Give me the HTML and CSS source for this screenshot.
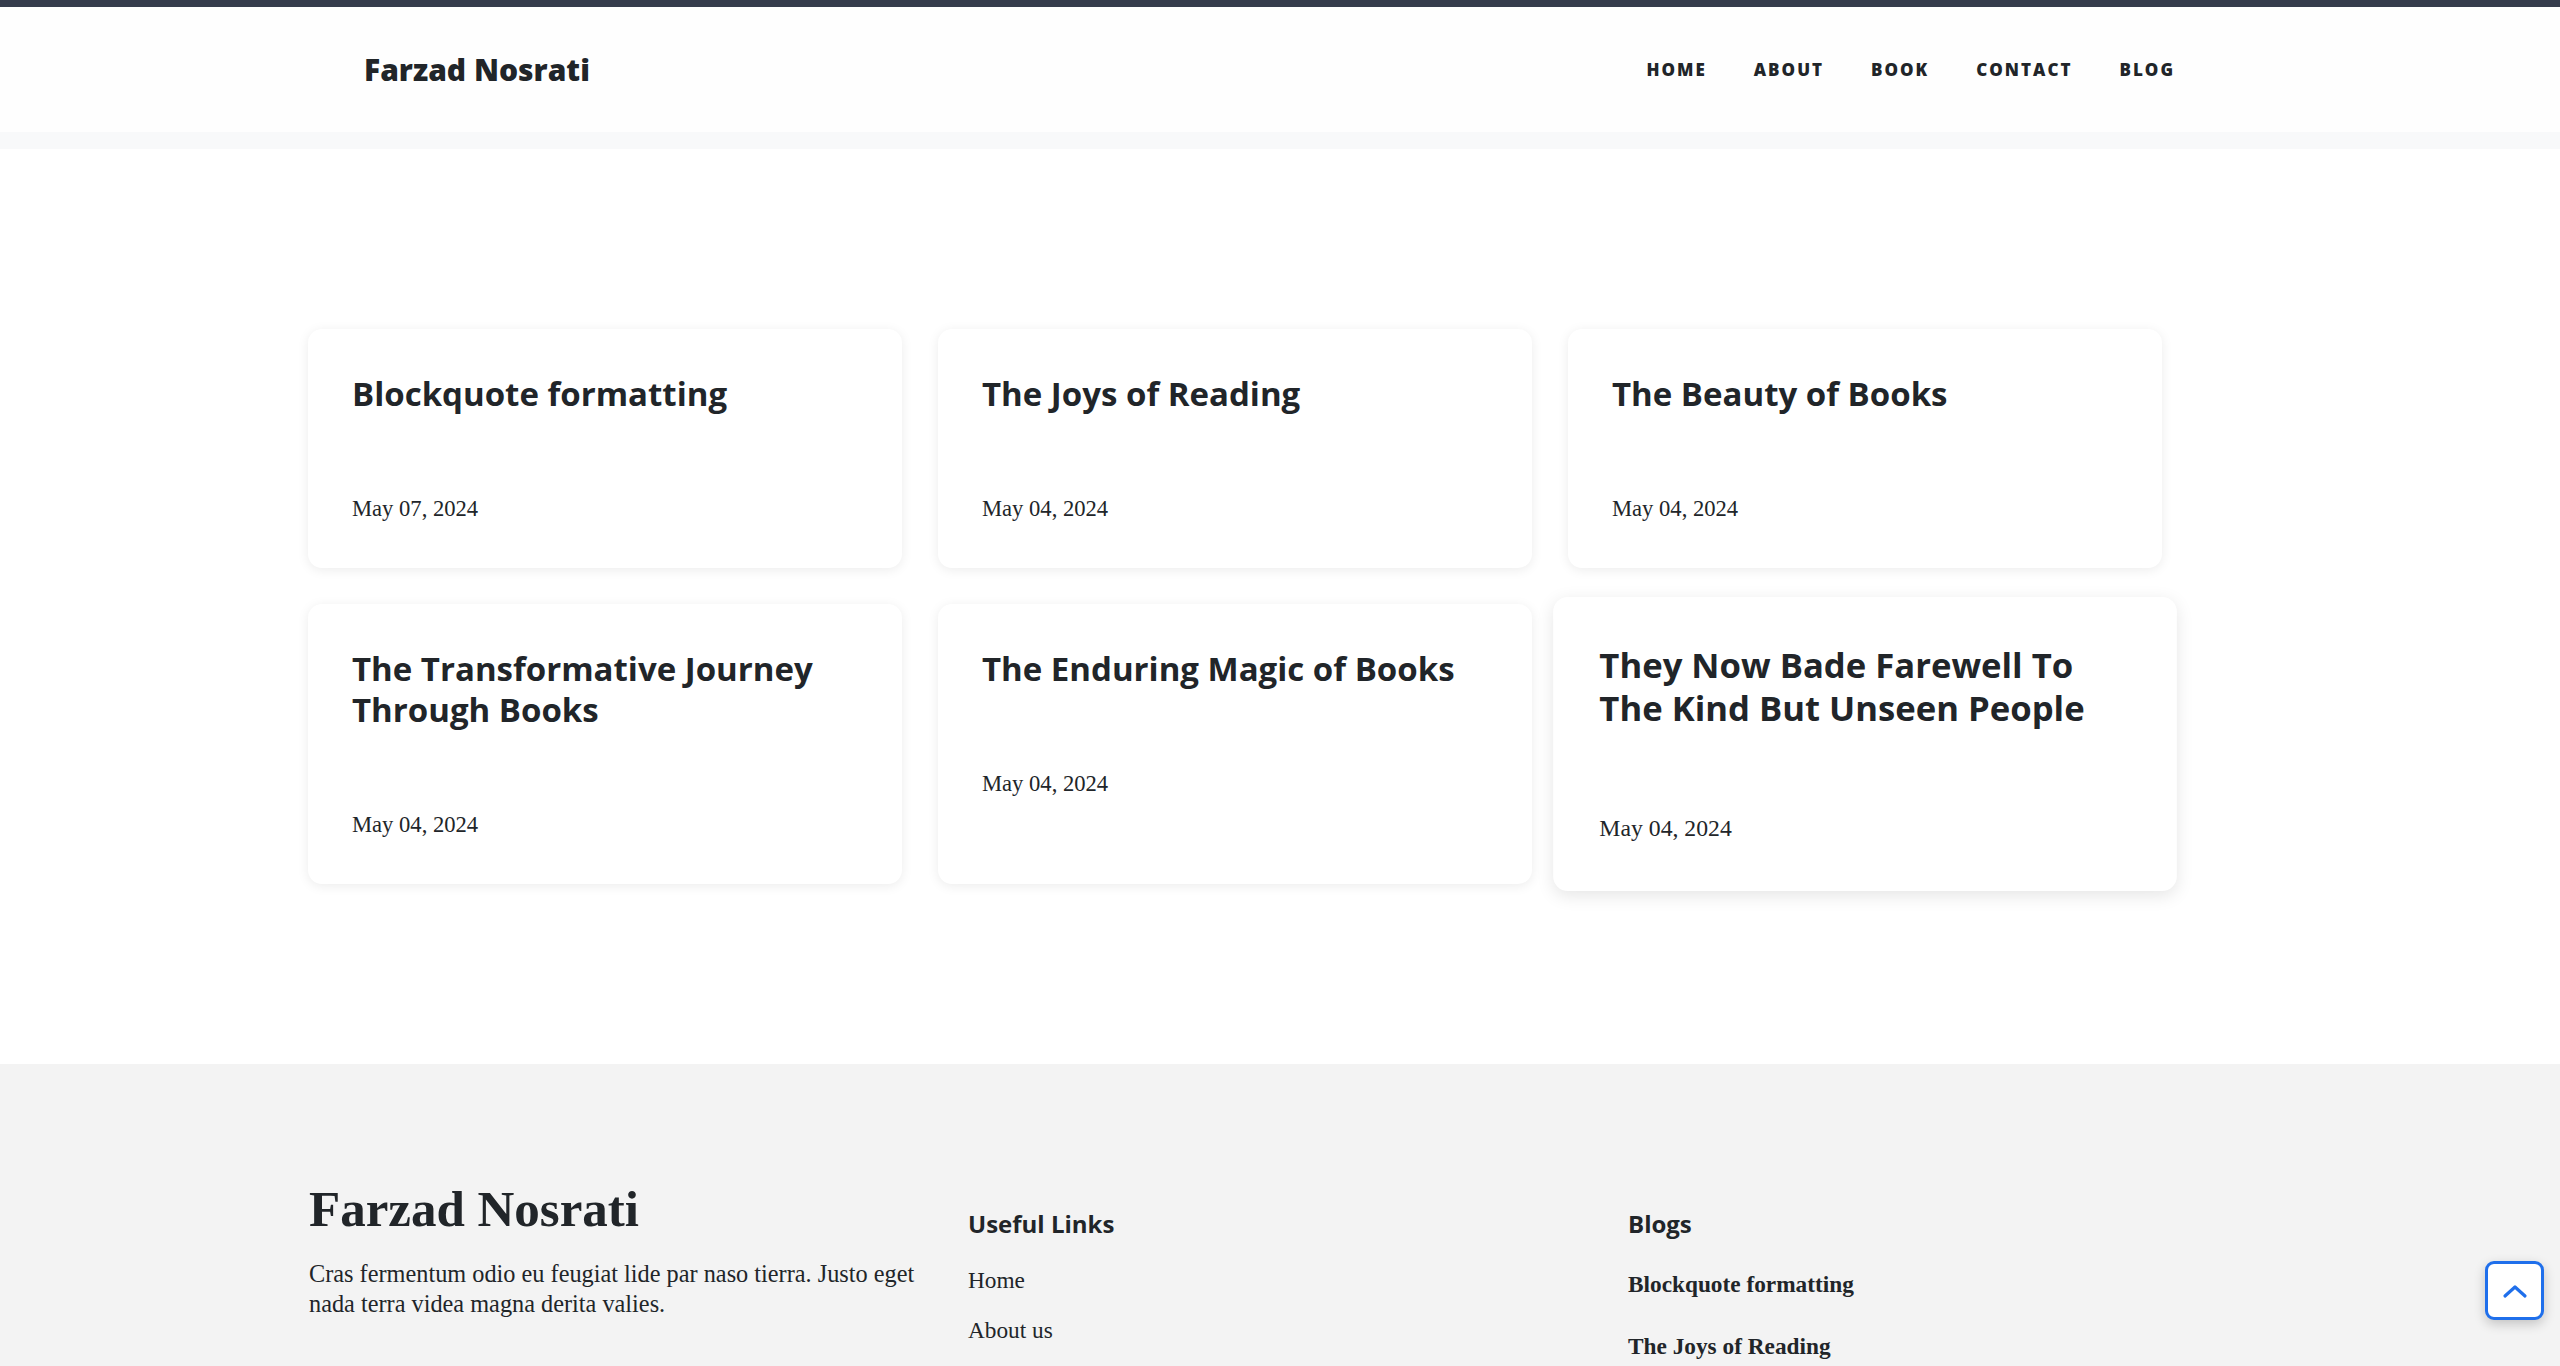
FILE: index.html
```html
<!DOCTYPE html>
<html lang="en">
<head>
<meta charset="utf-8">
<title>Farzad Nosrati</title>
<link rel="stylesheet" href="styles.css">
</head>
<body>
<div class="topbar"></div>
<header class="site-header">
  <div class="header-inner">
    <a class="brand" href="#">Farzad Nosrati</a>
    <nav class="nav">
      <a href="#">Home</a>
      <a href="#">About</a>
      <a href="#">Book</a>
      <a href="#">Contact</a>
      <a href="#">Blog</a>
    </nav>
  </div>
</header>
<div class="header-band"></div>
<main class="posts">
  <div class="cards">
    <article class="card"><h2 class="card-title">Blockquote formatting</h2><p class="card-date">May 07, 2024</p></article>
    <article class="card"><h2 class="card-title">The Joys of Reading</h2><p class="card-date">May 04, 2024</p></article>
    <article class="card"><h2 class="card-title">The Beauty of Books</h2><p class="card-date">May 04, 2024</p></article>
    <article class="card"><h2 class="card-title">The Transformative Journey Through Books</h2><p class="card-date">May 04, 2024</p></article>
    <article class="card"><h2 class="card-title">The Enduring Magic of Books</h2><p class="card-date">May 04, 2024</p></article>
    <article class="card card-hover"><h2 class="card-title">They Now Bade Farewell To The Kind But Unseen People</h2><p class="card-date">May 04, 2024</p></article>
  </div>
</main>
<footer class="site-footer">
  <div class="footer-inner">
    <div class="footer-col">
      <h2 class="footer-brand">Farzad Nosrati</h2>
      <p class="footer-text">Cras fermentum odio eu feugiat lide par naso tierra. Justo eget nada terra videa magna derita valies.</p>
    </div>
    <div class="footer-col">
      <h3 class="footer-heading">Useful Links</h3>
      <ul class="footer-links">
        <li><a href="#">Home</a></li>
        <li><a href="#">About us</a></li>
      </ul>
    </div>
    <div class="footer-col">
      <h3 class="footer-heading">Blogs</h3>
      <ul class="footer-blogs">
        <li><a href="#">Blockquote formatting</a></li>
        <li><a href="#">The Joys of Reading</a></li>
      </ul>
    </div>
  </div>
</footer>
<a class="to-top" href="#" aria-label="Back to top">
  <svg width="26" height="16" viewBox="0 0 26 16"><polyline points="3,13 13,4 23,13" fill="none" stroke="#1f6feb" stroke-width="3.2" stroke-linecap="round" stroke-linejoin="round"/></svg>
</a>
</body>
</html>
```

FILE: styles.css
```css
* { box-sizing: border-box; }
html, body { margin: 0; padding: 0; }
body {
  font-family: "Liberation Serif", "Times New Roman", serif;
  font-size: 22px;
  line-height: 30px;
  color: #212529;
  background: #fff;
}
a { color: inherit; text-decoration: none; }

.topbar { height: 7px; background: #353c4c; }

.site-header { background: #fefefe; height: 125px; display: flex; align-items: center; }
.header-inner {
  width: 1811px;
  margin-left: 364px;
  display: flex;
  align-items: center;
  justify-content: space-between;
}
.brand {
  font-family: "Open Sans", sans-serif;
  font-weight: 800;
  font-size: 30px;
  line-height: 1.2;
  color: #212529;
}
.nav { display: flex; gap: 47px; }
.nav a {
  font-family: "Open Sans", sans-serif;
  font-weight: 800;
  font-size: 17px;
  letter-spacing: 2px;
  text-transform: uppercase;
  color: #212529;
}
.header-band { height: 17px; background: #f8f9fa; }

.posts { padding: 180px 0 180px 308px; }
.cards {
  display: grid;
  grid-template-columns: repeat(3, 594px);
  column-gap: 36px;
  row-gap: 36px;
}
.card {
  background: #fff;
  border-radius: 14px;
  box-shadow: 0 2px 12px rgba(0, 0, 0, 0.08);
  padding: 44px 45px 43px 44px;
}
.card-hover { transform: scale(1.05); box-shadow: 0 4px 16px rgba(0, 0, 0, 0.1); }
.card-title {
  margin: 0 0 78px;
  font-family: "Open Sans", sans-serif;
  font-weight: 700;
  font-size: 33px;
  line-height: 41px;
  color: #212529;
}
.card-date { margin: 0; font-size: 22.6px; line-height: 33px; }

.site-footer { background: #f3f3f3; padding: 117px 0 60px; }
.footer-inner {
  margin-left: 309px;
  display: grid;
  grid-template-columns: 659px 660px 660px;
}
.footer-brand {
  margin: 0;
  font-family: "Liberation Serif", serif;
  font-weight: 700;
  font-size: 51px;
  line-height: 57px;
}
.footer-text { margin: 21px 0 0; width: 628px; font-size: 24.3px; }
.footer-heading {
  margin: 29px 0 0;
  font-family: "Open Sans", sans-serif;
  font-weight: 700;
  font-size: 24px;
  line-height: 1.2;
}
.footer-links, .footer-blogs { list-style: none; margin: 0; padding: 0; font-size: 23.3px; }
.footer-links { margin-top: 26px; }
.footer-links li + li { margin-top: 20px; }
.footer-blogs { margin-top: 30px; font-weight: 700; }
.footer-blogs li + li { margin-top: 32px; }

.to-top {
  position: fixed;
  right: 16px;
  bottom: 46px;
  width: 59px;
  height: 59px;
  border: 3px solid #1f6feb;
  border-radius: 9px;
  background: #fff;
  box-shadow: 0 4px 12px rgba(0, 0, 0, 0.2);
  display: flex;
  align-items: center;
  justify-content: center;
}
```
